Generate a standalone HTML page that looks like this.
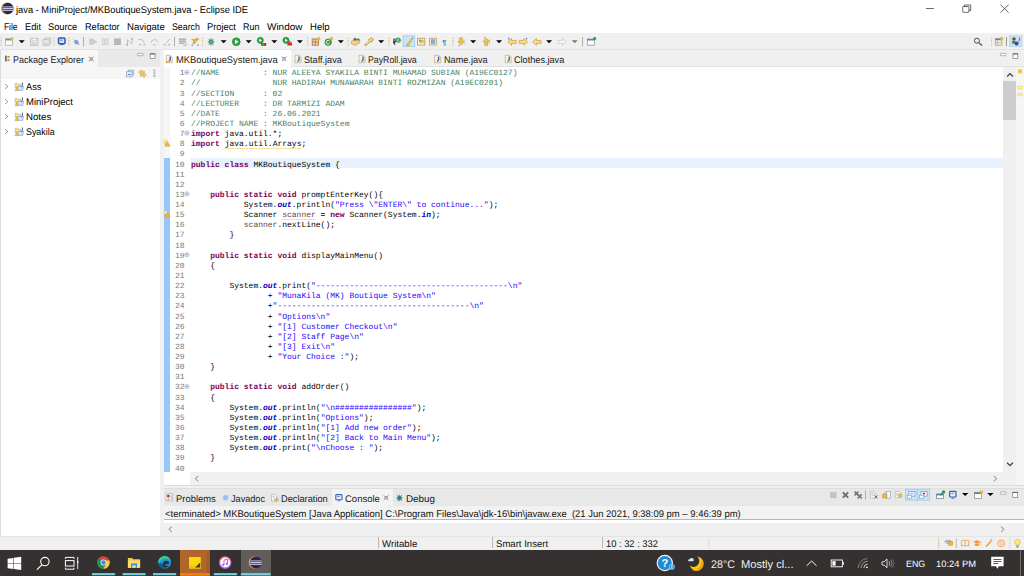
<!DOCTYPE html>
<html><head><meta charset="utf-8"><title>java - MiniProject/MKBoutiqueSystem.java - Eclipse IDE</title>
<style>

*{box-sizing:border-box;margin:0;padding:0}
html,body{width:1024px;height:576px;overflow:hidden;background:#f0f0f0;font-family:"Liberation Sans",sans-serif;color:#000}
.a{position:absolute}
.t{position:absolute;white-space:pre;line-height:1;text-rendering:geometricPrecision}
.ln{position:absolute;left:160px;width:24.6px;text-align:right;font:8px/10.1333px "Liberation Mono",monospace;color:#787878;white-space:pre;text-rendering:geometricPrecision}
.cl{position:absolute;font:8px/10.1333px "Liberation Mono",monospace;color:#000;white-space:pre;text-rendering:geometricPrecision}
.k{color:#7f0055;font-weight:bold}
.c{color:#3f7f5f}
.s{color:#2a00ff}
.f{color:#0000c0;font-weight:bold;font-style:italic}
.v{color:#6a3e3e}
.vw{color:#6a3e3e}
.w{}
.sq{position:absolute;height:1.2px;background:repeating-linear-gradient(90deg,#f3d67e 0 1.2px,#faecc4 1.2px 2.4px)}

</style></head>
<body>
<div class="a" style="left:0px;top:0px;width:1024px;height:33px;background:#fff;"></div>
<div class="t" style="left:16.30px;top:6.00px;font-size:9.80px;transform:scaleX(0.9508);transform-origin:0 0;">java - MiniProject/MKBoutiqueSystem.java - Eclipse IDE</div>
<div class="t" style="left:4.00px;top:23.00px;font-size:9.70px;transform:scaleX(0.8637);transform-origin:0 0;">File</div>
<div class="t" style="left:25.20px;top:23.00px;font-size:9.70px;transform:scaleX(0.9572);transform-origin:0 0;">Edit</div>
<div class="t" style="left:48.30px;top:23.00px;font-size:9.70px;transform:scaleX(0.9533);transform-origin:0 0;">Source</div>
<div class="t" style="left:84.90px;top:23.00px;font-size:9.70px;transform:scaleX(0.9465);transform-origin:0 0;">Refactor</div>
<div class="t" style="left:127.00px;top:23.00px;font-size:9.70px;transform:scaleX(0.9900);transform-origin:0 0;">Navigate</div>
<div class="t" style="left:171.60px;top:23.00px;font-size:9.70px;transform:scaleX(0.9077);transform-origin:0 0;">Search</div>
<div class="t" style="left:207.00px;top:23.00px;font-size:9.70px;transform:scaleX(0.9573);transform-origin:0 0;">Project</div>
<div class="t" style="left:243.30px;top:23.00px;font-size:9.70px;transform:scaleX(0.9272);transform-origin:0 0;">Run</div>
<div class="t" style="left:267.30px;top:23.00px;font-size:9.70px;transform:scaleX(1.0290);transform-origin:0 0;">Window</div>
<div class="t" style="left:310.20px;top:23.00px;font-size:9.70px;transform:scaleX(0.9875);transform-origin:0 0;">Help</div>
<div class="a" style="left:0px;top:33px;width:1024px;height:16.5px;background:#f0f0f0;"></div>
<div class="a" style="left:0px;top:49px;width:1024px;height:1px;background:#e3e3e3;"></div>
<div class="a" style="left:0px;top:50px;width:160.3px;height:485.5px;background:#fff;"></div>
<div class="a" style="left:0px;top:50px;width:160.3px;height:16.6px;background:#e9e9e9;"></div>
<div class="a" style="left:0px;top:50px;width:98px;height:16.6px;background:#f6f6f6;"></div>
<div class="a" style="left:0px;top:66.6px;width:160.3px;height:12px;background:#f6f6f6;"></div>
<div class="a" style="left:0px;top:50px;width:1px;height:485.5px;background:#dcdcdc;"></div>
<div class="t" style="left:13.20px;top:56.00px;font-size:9.70px;transform:scaleX(0.9286);transform-origin:0 0;color:#1a1a1a;">Package Explorer</div>
<div class="t" style="left:25.90px;top:83.00px;font-size:9.70px;transform:scaleX(0.9524);transform-origin:0 0;">Ass</div>
<div class="t" style="left:26.20px;top:98.00px;font-size:9.70px;transform:scaleX(0.9796);transform-origin:0 0;">MiniProject</div>
<div class="t" style="left:26.20px;top:113.00px;font-size:9.70px;transform:scaleX(0.9984);transform-origin:0 0;">Notes</div>
<div class="t" style="left:25.80px;top:128.00px;font-size:9.70px;transform:scaleX(0.9146);transform-origin:0 0;">Syakila</div>
<div class="a" style="left:163.7px;top:49.6px;width:860.3px;height:17px;background:#f0f0f0;"></div>
<div class="a" style="left:163.7px;top:49.6px;width:127.5px;height:17.4px;background:#fff;"></div>
<div class="a" style="left:291.2px;top:66.2px;width:733px;height:0.8px;background:#e0e0e0;"></div>
<div class="a" style="left:163.7px;top:67px;width:839.3px;height:405px;background:#fff;"></div>
<div class="a" style="left:163.7px;top:67px;width:6.3px;height:405px;background:#f6f6f6;"></div>
<div class="a" style="left:163.7px;top:472px;width:26.1px;height:12.8px;background:#fff;"></div>
<div class="a" style="left:163.8px;top:158px;width:6.1px;height:313.5px;background:#97c6f8;"></div>
<div class="a" style="left:191px;top:158.1px;width:812px;height:10.1px;background:#e8f2fe;"></div>
<div class="a" style="left:1003px;top:67px;width:13px;height:405px;background:#f0f0f0;"></div>
<div class="a" style="left:1003px;top:81px;width:13px;height:39px;background:#cdcdcd;"></div>
<div class="a" style="left:1016px;top:67px;width:8px;height:418px;background:#f5f5f5;"></div>
<div class="a" style="left:189.8px;top:472px;width:826px;height:12.8px;background:#f0f0f0;"></div>
<div class="a" style="left:163.7px;top:484.8px;width:860.3px;height:0.8px;background:#dcdcdc;"></div>
<div class="t" style="left:175.80px;top:56.00px;font-size:9.70px;transform:scaleX(0.9633);transform-origin:0 0;color:#1a1a1a;">MKBoutiqueSystem.java</div>
<div class="t" style="left:303.80px;top:56.00px;font-size:9.70px;transform:scaleX(0.9388);transform-origin:0 0;color:#1a1a1a;">Staff.java</div>
<div class="t" style="left:368.20px;top:56.00px;font-size:9.70px;transform:scaleX(0.9051);transform-origin:0 0;color:#1a1a1a;">PayRoll.java</div>
<div class="t" style="left:443.60px;top:56.00px;font-size:9.70px;transform:scaleX(0.9425);transform-origin:0 0;color:#1a1a1a;">Name.java</div>
<div class="t" style="left:513.80px;top:56.00px;font-size:9.70px;transform:scaleX(0.9423);transform-origin:0 0;color:#1a1a1a;">Clothes.java</div>
<div class="ln" style="top:69.30px">1</div>
<div class="cl" style="top:69.30px;left:191.00px"><span class="c">//NAME         : NUR ALEEYA SYAKILA BINTI MUHAMAD SUBIAN (A19EC0127)</span></div>
<div class="ln" style="top:79.43px">2</div>
<div class="cl" style="top:79.43px;left:191.00px"><span class="c">//               NUR HADIRAH MUNAWARAH BINTI ROZMIZAN (A19EC0201)</span></div>
<div class="ln" style="top:89.57px">3</div>
<div class="cl" style="top:89.57px;left:191.00px"><span class="c">//SECTION      : 02</span></div>
<div class="ln" style="top:99.70px">4</div>
<div class="cl" style="top:99.70px;left:191.00px"><span class="c">//LECTURER     : DR TARMIZI ADAM</span></div>
<div class="ln" style="top:109.83px">5</div>
<div class="cl" style="top:109.83px;left:191.00px"><span class="c">//DATE         : 26.06.2021</span></div>
<div class="ln" style="top:119.97px">6</div>
<div class="cl" style="top:119.97px;left:191.00px"><span class="c">//PROJECT NAME : MKBoutiqueSystem</span></div>
<div class="ln" style="top:130.10px">7</div>
<div class="cl" style="top:130.10px;left:191.00px"><span class="k">import</span> java.util.*;</div>
<div class="ln" style="top:140.23px">8</div>
<div class="sq" style="top:147.73px;left:224.60px;width:76.80px"></div>
<div class="cl" style="top:140.23px;left:191.00px"><span class="k">import</span> <span class="w">java.util.Arrays</span>;</div>
<div class="ln" style="top:150.37px">9</div>
<div class="ln" style="top:160.50px">10</div>
<div class="cl" style="top:160.50px;left:191.00px"><span class="k">public class</span> MKBoutiqueSystem {</div>
<div class="ln" style="top:170.63px">11</div>
<div class="ln" style="top:180.77px">12</div>
<div class="ln" style="top:190.90px">13</div>
<div class="cl" style="top:190.90px;left:210.20px"><span class="k">public static void</span> promptEnterKey(){</div>
<div class="ln" style="top:201.03px">14</div>
<div class="cl" style="top:201.03px;left:243.80px">System.<span class="f">out</span>.println(<span class="s">"Press \"ENTER\" to continue..."</span>);</div>
<div class="ln" style="top:211.17px">15</div>
<div class="sq" style="top:218.67px;left:282.20px;width:33.60px"></div>
<div class="cl" style="top:211.17px;left:243.80px">Scanner <span class="vw">scanner</span> = <span class="k">new</span> Scanner(System.<span class="f">in</span>);</div>
<div class="ln" style="top:221.30px">16</div>
<div class="cl" style="top:221.30px;left:243.80px"><span class="v">scanner</span>.nextLine();</div>
<div class="ln" style="top:231.43px">17</div>
<div class="cl" style="top:231.43px;left:229.40px">}</div>
<div class="ln" style="top:241.57px">18</div>
<div class="ln" style="top:251.70px">19</div>
<div class="cl" style="top:251.70px;left:210.20px"><span class="k">public static void</span> displayMainMenu()</div>
<div class="ln" style="top:261.83px">20</div>
<div class="cl" style="top:261.83px;left:210.20px">{</div>
<div class="ln" style="top:271.97px">21</div>
<div class="ln" style="top:282.10px">22</div>
<div class="cl" style="top:282.10px;left:229.40px">System.<span class="f">out</span>.print(<span class="s">"----------------------------------------\n"</span></div>
<div class="ln" style="top:292.23px">23</div>
<div class="cl" style="top:292.23px;left:267.80px">+ <span class="s">"MunaKila (MK) Boutique System\n"</span></div>
<div class="ln" style="top:302.37px">24</div>
<div class="cl" style="top:302.37px;left:267.80px">+<span class="s">"----------------------------------------\n"</span></div>
<div class="ln" style="top:312.50px">25</div>
<div class="cl" style="top:312.50px;left:267.80px">+ <span class="s">"Options\n"</span></div>
<div class="ln" style="top:322.63px">26</div>
<div class="cl" style="top:322.63px;left:267.80px">+ <span class="s">"[1] Customer Checkout\n"</span></div>
<div class="ln" style="top:332.77px">27</div>
<div class="cl" style="top:332.77px;left:267.80px">+ <span class="s">"[2] Staff Page\n"</span></div>
<div class="ln" style="top:342.90px">28</div>
<div class="cl" style="top:342.90px;left:267.80px">+ <span class="s">"[3] Exit\n"</span></div>
<div class="ln" style="top:353.03px">29</div>
<div class="cl" style="top:353.03px;left:267.80px">+ <span class="s">"Your Choice :"</span>);</div>
<div class="ln" style="top:363.17px">30</div>
<div class="cl" style="top:363.17px;left:210.20px">}</div>
<div class="ln" style="top:373.30px">31</div>
<div class="ln" style="top:383.43px">32</div>
<div class="cl" style="top:383.43px;left:210.20px"><span class="k">public static void</span> addOrder()</div>
<div class="ln" style="top:393.57px">33</div>
<div class="cl" style="top:393.57px;left:210.20px">{</div>
<div class="ln" style="top:403.70px">34</div>
<div class="cl" style="top:403.70px;left:229.40px">System.<span class="f">out</span>.println(<span class="s">"\n################"</span>);</div>
<div class="ln" style="top:413.83px">35</div>
<div class="cl" style="top:413.83px;left:229.40px">System.<span class="f">out</span>.println(<span class="s">"Options"</span>);</div>
<div class="ln" style="top:423.97px">36</div>
<div class="cl" style="top:423.97px;left:229.40px">System.<span class="f">out</span>.println(<span class="s">"[1] Add new order"</span>);</div>
<div class="ln" style="top:434.10px">37</div>
<div class="cl" style="top:434.10px;left:229.40px">System.<span class="f">out</span>.println(<span class="s">"[2] Back to Main Menu"</span>);</div>
<div class="ln" style="top:444.23px">38</div>
<div class="cl" style="top:444.23px;left:229.40px">System.<span class="f">out</span>.print(<span class="s">"\nChoose : "</span>);</div>
<div class="ln" style="top:454.37px">39</div>
<div class="cl" style="top:454.37px;left:210.20px">}</div>
<div class="ln" style="top:464.50px;height:7.6px;overflow:hidden">40</div>
<div class="a" style="left:163.7px;top:488.2px;width:860.3px;height:17.6px;background:#e8e8e8;"></div>
<div class="a" style="left:163.7px;top:488.2px;width:860.3px;height:0.8px;background:#dedede;"></div>
<div class="a" style="left:332px;top:488.8px;width:61.1px;height:17px;background:#f3f3f3;"></div>
<div class="a" style="left:163.7px;top:505.6px;width:860.3px;height:13.4px;background:#f2f2f2;"></div>
<div class="a" style="left:163.7px;top:519px;width:860.3px;height:0.9px;background:#b6b6b6;"></div>
<div class="a" style="left:163.7px;top:519.9px;width:860.3px;height:2.7px;background:#fff;"></div>
<div class="a" style="left:163.7px;top:522.6px;width:860.3px;height:13.4px;background:#f0f0f0;"></div>
<div class="a" style="left:0px;top:536px;width:1024px;height:0.7px;background:#e4e4e4;"></div>
<div class="t" style="left:176.20px;top:495.00px;font-size:9.70px;transform:scaleX(0.9714);transform-origin:0 0;color:#1a1a1a;">Problems</div>
<div class="t" style="left:231.40px;top:495.00px;font-size:9.70px;transform:scaleX(0.9411);transform-origin:0 0;color:#1a1a1a;">Javadoc</div>
<div class="t" style="left:281.40px;top:495.00px;font-size:9.70px;transform:scaleX(0.9538);transform-origin:0 0;color:#1a1a1a;">Declaration</div>
<div class="t" style="left:344.50px;top:495.00px;font-size:9.70px;transform:scaleX(0.9806);transform-origin:0 0;color:#1a1a1a;">Console</div>
<div class="t" style="left:405.60px;top:495.00px;font-size:9.70px;transform:scaleX(1.0180);transform-origin:0 0;color:#1a1a1a;">Debug</div>
<div class="t" style="left:164.80px;top:510.00px;font-size:9.70px;transform:scaleX(0.9764);transform-origin:0 0;color:#111;">&lt;terminated&gt; MKBoutiqueSystem [Java Application] C:\Program Files\Java\jdk-16\bin\javaw.exe  (21 Jun 2021, 9:38:09 pm – 9:46:39 pm)</div>
<div class="t" style="left:382.30px;top:540.00px;font-size:9.70px;transform:scaleX(0.9972);transform-origin:0 0;color:#111;">Writable</div>
<div class="t" style="left:496.00px;top:540.00px;font-size:9.70px;transform:scaleX(0.9882);transform-origin:0 0;color:#111;">Smart Insert</div>
<div class="t" style="left:605.60px;top:540.00px;font-size:9.70px;transform:scaleX(0.9642);transform-origin:0 0;color:#111;">10 : 32 : 332</div>
<div class="a" style="left:378.2px;top:537px;width:0.7px;height:11px;background:#b8b8b8;"></div>
<div class="a" style="left:492.2px;top:537px;width:0.7px;height:11px;background:#b8b8b8;"></div>
<div class="a" style="left:601.6px;top:537px;width:0.7px;height:11px;background:#b8b8b8;"></div>
<div class="a" style="left:0px;top:550.4px;width:1024px;height:25.6px;background:#343130;"></div>
<div class="a" style="left:180px;top:550.4px;width:30px;height:25.6px;background:#b0652b;"></div>
<div class="a" style="left:241.2px;top:550.4px;width:29.4px;height:25.6px;background:#605d5a;"></div>
<div class="t" style="left:711.40px;top:560.00px;font-size:11.20px;transform:scaleX(0.9550);transform-origin:0 0;color:#f2f2f2;">28°C</div>
<div class="t" style="left:741.40px;top:560.00px;font-size:11.20px;transform:scaleX(0.9944);transform-origin:0 0;color:#f2f2f2;">Mostly cl...</div>
<div class="t" style="left:905.70px;top:560.00px;font-size:9.20px;transform:scaleX(0.9681);transform-origin:0 0;color:#fff;">ENG</div>
<div class="t" style="left:935.60px;top:560.00px;font-size:9.20px;transform:scaleX(1.0208);transform-origin:0 0;color:#fff;">10:24 PM</div>
<svg class="a" style="left:0;top:0" width="1024" height="576" viewBox="0 0 1024 576">
<circle cx="6.90" cy="8.50" r="5.90" fill="#f29b30"/>
<circle cx="7.90" cy="8.50" r="5.70" fill="#2c2255"/>
<rect x="2.50" y="6.35" width="10.90" height="1.10" fill="#b9b5d0"/>
<rect x="2.50" y="8.15" width="10.90" height="1.10" fill="#e6e4f0"/>
<rect x="2.50" y="9.95" width="10.90" height="1.10" fill="#b9b5d0"/>
<path d="M925.9 8.5 h8.0" fill="none" stroke="#2a2a2a" stroke-width="0.7"/>
<rect x="962.70" y="6.50" width="6.20" height="5.80" fill="none" stroke="#2a2a2a" stroke-width="0.7" rx="0.6"/>
<path d="M964.4 6.5 v-1.5 h6.3 v5.6 h-1.8" fill="none" stroke="#2a2a2a" stroke-width="0.7"/>
<path d="M1000.4 4.7 l8.2 8.0 M1008.6 4.7 l-8.2 8.0" fill="none" stroke="#2a2a2a" stroke-width="0.7"/>
<rect x="0.70" y="37.60" width="1.1" height="1.1" fill="#d0b985"/>
<rect x="0.70" y="39.90" width="1.1" height="1.1" fill="#d0b985"/>
<rect x="0.70" y="42.20" width="1.1" height="1.1" fill="#d0b985"/>
<rect x="0.70" y="44.50" width="1.1" height="1.1" fill="#d0b985"/>
<rect x="5.40" y="38.80" width="7.00" height="6.40" fill="#fffdf2" stroke="#a09a80" stroke-width="0.6"/>
<rect x="5.40" y="38.80" width="7.00" height="1.60" fill="#5f8fd0"/>
<circle cx="11.90" cy="38.70" r="1.40" fill="#f4cc48" stroke="#c79a1c" stroke-width="0.4"/>
<path d="M18.75 40.25 h6.00 l-3.00 3.00 z" fill="#000"/>
<rect x="30.40" y="38.20" width="7.60" height="7.20" fill="#e6e6e6" stroke="#bdbdbd" stroke-width="0.8"/>
<rect x="32.20" y="38.20" width="4.00" height="2.60" fill="#f6f6f6" stroke="#c6c6c6" stroke-width="0.5"/>
<rect x="32.00" y="42.40" width="4.40" height="3.00" fill="#d4d4d4"/>
<rect x="44.60" y="38.00" width="6.20" height="5.80" fill="#e2e2e2" stroke="#c0c0c0" stroke-width="0.8"/>
<rect x="42.90" y="39.70" width="6.20" height="5.80" fill="#e8e8e8" stroke="#bdbdbd" stroke-width="0.8"/>
<rect x="44.30" y="43.00" width="3.40" height="2.50" fill="#d2d2d2"/>
<rect x="53.40" y="37.60" width="1.1" height="1.1" fill="#d0b985"/>
<rect x="53.40" y="39.90" width="1.1" height="1.1" fill="#d0b985"/>
<rect x="53.40" y="42.20" width="1.1" height="1.1" fill="#d0b985"/>
<rect x="53.40" y="44.50" width="1.1" height="1.1" fill="#d0b985"/>
<rect x="58.50" y="37.90" width="6.50" height="5.80" fill="#d4e2f6" stroke="#2c5ab0" stroke-width="1.5" rx="0.9"/>
<rect x="60.10" y="39.70" width="2.40" height="0.90" fill="#4a70b8"/>
<rect x="60.20" y="44.20" width="3.20" height="0.90" fill="#2c5ab0"/>
<rect x="68.40" y="37.60" width="1.1" height="1.1" fill="#d0b985"/>
<rect x="68.40" y="39.90" width="1.1" height="1.1" fill="#d0b985"/>
<rect x="68.40" y="42.20" width="1.1" height="1.1" fill="#d0b985"/>
<rect x="68.40" y="44.50" width="1.1" height="1.1" fill="#d0b985"/>
<circle cx="76.40" cy="42.20" r="1.70" fill="#9fc0e6" stroke="#4a78b4" stroke-width="0.6"/>
<path d="M74.0 39.6 l5.2 5.2" fill="none" stroke="#4a70a8" stroke-width="0.8"/>
<rect x="83.15" y="37.00" width="0.9" height="9.30" fill="#a8a8a8"/>
<rect x="89.20" y="38.80" width="1.50" height="6.00" fill="#c4c4c4"/>
<path d="M91.6 38.8 l5.2 3 l-5.2 3z" fill="#d2d2d2" stroke="#b4b4b4" stroke-width="0.6"/>
<rect x="102.20" y="38.80" width="2.40" height="6.00" fill="#e4e4e4" stroke="#c4c4c4" stroke-width="0.6"/>
<rect x="105.80" y="38.80" width="2.40" height="6.00" fill="#e4e4e4" stroke="#c4c4c4" stroke-width="0.6"/>
<rect x="114.60" y="38.90" width="5.80" height="5.80" fill="#b9b9b9" stroke="#a8a8a8" stroke-width="0.6"/>
<path d="M127.4 44.4 v-4.6 l4.6 4.4 v-4.6" fill="none" stroke="#bcbcbc" stroke-width="0.9"/>
<circle cx="132.20" cy="39.00" r="1.00" fill="#adadad"/>
<circle cx="127.20" cy="44.80" r="1.00" fill="#adadad"/>
<path d="M138.6 39.6 h3.4 l2.4 3.6" fill="none" stroke="#bdbdbd" stroke-width="1"/>
<rect x="139.00" y="44.20" width="2.20" height="1.10" fill="#b4b4b4"/>
<rect x="143.40" y="44.20" width="2.00" height="1.10" fill="#b4b4b4"/>
<path d="M151.3 43 q0.2 -3.6 3.3 -3.4 q2.8 0 3 2.6" fill="none" stroke="#c2c2c2" stroke-width="1"/>
<rect x="153.20" y="44.20" width="2.40" height="1.10" fill="#bcbcbc"/>
<path d="M169.8 39.2 l-3.6 4" fill="none" stroke="#bdbdbd" stroke-width="1"/>
<rect x="163.40" y="44.20" width="2.40" height="1.10" fill="#b4b4b4"/>
<rect x="167.80" y="44.20" width="2.20" height="1.10" fill="#b4b4b4"/>
<rect x="174.05" y="37.00" width="0.9" height="9.30" fill="#a8a8a8"/>
<rect x="179.00" y="38.70" width="7.00" height="0.75" fill="#6e6e6e"/>
<rect x="179.00" y="40.70" width="7.00" height="0.75" fill="#6e6e6e"/>
<rect x="179.00" y="42.70" width="4.80" height="0.75" fill="#6e6e6e"/>
<circle cx="185.00" cy="44.30" r="1.40" fill="none" stroke="#9a9a9a" stroke-width="0.6"/>
<path d="M191.6 39.5 h3 l2.6 -1.4 l1.6 1 l-3 2.6 l-1.4 2.2 l-1.6 -0.6 l1 -2.4z" fill="#d9a928" stroke="#b98a18" stroke-width="0.4"/>
<path d="M193.0 42.6 l4.6 -3.6" fill="none" stroke="#e8c250" stroke-width="0.8"/>
<rect x="191.60" y="44.60" width="1.40" height="1.00" fill="#3c6ab0"/>
<rect x="197.20" y="44.60" width="1.40" height="1.00" fill="#3c6ab0"/>
<rect x="202.10" y="37.60" width="1.1" height="1.1" fill="#d0b985"/>
<rect x="202.10" y="39.90" width="1.1" height="1.1" fill="#d0b985"/>
<rect x="202.10" y="42.20" width="1.1" height="1.1" fill="#d0b985"/>
<rect x="202.10" y="44.50" width="1.1" height="1.1" fill="#d0b985"/>
<path d="M207.8 41.9 h6.8 M208.5 38.9 l5.2 6.0 M213.7 38.9 l-5.2 6.0 M211.1 38.0 v7.8" fill="none" stroke="#2f8577" stroke-width="0.7"/>
<circle cx="211.10" cy="41.90" r="2.10" fill="#54b09c" stroke="#1f6f66" stroke-width="0.6"/>
<path d="M220.60 40.25 h6.00 l-3.00 3.00 z" fill="#000"/>
<circle cx="236.25" cy="41.75" r="3.90" fill="#35a243" stroke="#1f7a2c" stroke-width="0.6"/>
<path d="M235.0 39.6 l3.5 2.15 l-3.5 2.15z" fill="#fff"/>
<path d="M245.70 40.25 h6.00 l-3.00 3.00 z" fill="#000"/>
<circle cx="260.30" cy="40.30" r="3.10" fill="#35a243" stroke="#1f7a2c" stroke-width="0.5"/>
<path d="M259.4 38.7 l2.6 1.6 l-2.6 1.6z" fill="#fff"/>
<rect x="261.20" y="43.30" width="2.40" height="2.30" fill="#2fa33c"/>
<rect x="263.60" y="43.30" width="2.40" height="2.30" fill="#d42020"/>
<rect x="261.20" y="43.30" width="4.80" height="2.30" fill="none" stroke="#333" stroke-width="0.4"/>
<path d="M271.30 40.25 h6.00 l-3.00 3.00 z" fill="#000"/>
<circle cx="286.00" cy="40.30" r="3.10" fill="#35a243" stroke="#1f7a2c" stroke-width="0.5"/>
<path d="M285.1 38.7 l2.6 1.6 l-2.6 1.6z" fill="#fff"/>
<rect x="287.40" y="42.60" width="4.60" height="2.80" fill="#d8262c" rx="0.5"/>
<rect x="288.80" y="41.70" width="1.80" height="1.00" fill="none" stroke="#d8262c" stroke-width="0.5"/>
<path d="M296.90 40.25 h6.00 l-3.00 3.00 z" fill="#000"/>
<rect x="307.10" y="37.60" width="1.1" height="1.1" fill="#d0b985"/>
<rect x="307.10" y="39.90" width="1.1" height="1.1" fill="#d0b985"/>
<rect x="307.10" y="42.20" width="1.1" height="1.1" fill="#d0b985"/>
<rect x="307.10" y="44.50" width="1.1" height="1.1" fill="#d0b985"/>
<rect x="312.20" y="39.00" width="6.20" height="6.20" fill="#e9d2b0" stroke="#a8703a" stroke-width="0.8"/>
<path d="M312.2 42.1 h6.2 M315.3 39 v6.2" fill="none" stroke="#a8703a" stroke-width="0.7"/>
<circle cx="318.60" cy="38.70" r="1.50" fill="#f2c12e" stroke="#c79a1c" stroke-width="0.4"/>
<circle cx="328.20" cy="42.20" r="3.30" fill="#3aa04a" stroke="#1f7a2c" stroke-width="0.6"/>
<path d="M329.6 41.0 a1.9 1.9 0 1 0 0 2.4" fill="none" stroke="#fff" stroke-width="0.9"/>
<circle cx="331.30" cy="38.70" r="1.40" fill="#f2c12e" stroke="#c79a1c" stroke-width="0.4"/>
<path d="M337.80 40.25 h6.00 l-3.00 3.00 z" fill="#000"/>
<rect x="347.70" y="37.60" width="1.1" height="1.1" fill="#d0b985"/>
<rect x="347.70" y="39.90" width="1.1" height="1.1" fill="#d0b985"/>
<rect x="347.70" y="42.20" width="1.1" height="1.1" fill="#d0b985"/>
<rect x="347.70" y="44.50" width="1.1" height="1.1" fill="#d0b985"/>
<path d="M351.6 41.0 l3.0 -1.8 l5.2 0.6 l-0.4 3.4 l-4.4 2.2 l-3.6 -1.6z" fill="#ecd28c" stroke="#b8923e" stroke-width="0.6"/>
<circle cx="355.00" cy="39.20" r="1.50" fill="#7a52a8"/>
<rect x="356.60" y="38.60" width="3.00" height="2.00" fill="#2f9e48" rx="0.9"/>
<path d="M364.4 44.9 l1.4 1.0 l3.4 -3.2 l3.4 -1.4 l0.6 -2.4 l-2.0 -1.2 l-2.2 1.4 l-1.0 2.6z" fill="#e8c66a" stroke="#9a7a34" stroke-width="0.5"/>
<path d="M366.4 43.6 l3.6 -3.6" fill="none" stroke="#fff3c4" stroke-width="0.8"/>
<circle cx="371.00" cy="39.60" r="0.80" fill="#f5e6a0"/>
<path d="M378.20 40.25 h6.00 l-3.00 3.00 z" fill="#000"/>
<rect x="388.40" y="37.60" width="1.1" height="1.1" fill="#d0b985"/>
<rect x="388.40" y="39.90" width="1.1" height="1.1" fill="#d0b985"/>
<rect x="388.40" y="42.20" width="1.1" height="1.1" fill="#d0b985"/>
<rect x="388.40" y="44.50" width="1.1" height="1.1" fill="#d0b985"/>
<path d="M393.0 39.0 h3.6 v3.0 h-1.4 v3.4 l-2.2 -2.6z" fill="#3a3a3a"/>
<rect x="393.00" y="38.60" width="3.40" height="2.60" fill="#7c72b0"/>
<circle cx="398.20" cy="40.20" r="2.40" fill="#3fa655" stroke="#1f7a2c" stroke-width="0.4"/>
<path d="M399.2 39.4 a1.2 1.2 0 1 0 0 1.6" fill="none" stroke="#fff" stroke-width="0.6"/>
<rect x="403.00" y="35.90" width="11.70" height="10.80" fill="#cce4f7" stroke="#90c8f6" stroke-width="0.7"/>
<path d="M406.2 45.2 l5.2 -6.6 l1.4 -0.4 l-0.2 1.6 l-3.8 5.2z" fill="#e8c64a" stroke="#b89a30" stroke-width="0.4"/>
<path d="M405.6 45.5 h4.2" fill="none" stroke="#e0b820" stroke-width="1.2"/>
<path d="M411.6 38.4 l1.4 -0.8" fill="none" stroke="#777" stroke-width="0.8"/>
<rect x="417.60" y="38.20" width="7.20" height="6.90" fill="#f4ecd6" stroke="#b49a62" stroke-width="0.8"/>
<path d="M420.2 39.8 l3.4 0 l0 3.6 l-1.6 -1.0 l-1.8 1.4z" fill="#e6b82e"/>
<rect x="419.00" y="39.60" width="1.60" height="2.00" fill="#6f8fc4"/>
<rect x="429.40" y="38.20" width="7.20" height="6.90" fill="#f2ecd8" stroke="#b8a46e" stroke-width="0.8"/>
<rect x="431.20" y="39.80" width="3.60" height="3.80" fill="#8fb0e4" stroke="#5c84c8" stroke-width="0.5"/>
<text x="442.3" y="44.7" font-family="Liberation Sans, sans-serif" font-size="7.2" font-weight="bold" fill="#4a7fd0">¶</text>
<rect x="452.40" y="37.60" width="1.1" height="1.1" fill="#d0b985"/>
<rect x="452.40" y="39.90" width="1.1" height="1.1" fill="#d0b985"/>
<rect x="452.40" y="42.20" width="1.1" height="1.1" fill="#d0b985"/>
<rect x="452.40" y="44.50" width="1.1" height="1.1" fill="#d0b985"/>
<path d="M459.6 37.8 h2.8 v3.6 h1.8 l-3.2 3.6 l-3.2 -3.6 h1.8z" fill="#f0c846" stroke="#b88a1a" stroke-width="0.5"/>
<rect x="463.60" y="39.20" width="1.00" height="5.60" fill="#b8c4dc"/>
<rect x="458.60" y="45.20" width="1.20" height="0.90" fill="#3c6ab0"/>
<path d="M470.10 40.25 h6.00 l-3.00 3.00 z" fill="#000"/>
<path d="M484.8 45.4 h2.8 v-3.6 h1.8 l-3.2 -3.6 l-3.2 3.6 h1.8z" fill="#f0c846" stroke="#b88a1a" stroke-width="0.5"/>
<rect x="489.00" y="38.60" width="1.00" height="5.60" fill="#b8c4dc"/>
<rect x="484.20" y="37.30" width="1.20" height="0.90" fill="#3c6ab0"/>
<path d="M496.10 40.25 h6.00 l-3.00 3.00 z" fill="#000"/>
<path d="M507.80 41.90 l3.8 -3.4 v1.9 h4.6 v3.0 h-4.6 v1.9z" fill="#f9dc7c" stroke="#c2901c" stroke-width="0.6"/>
<path d="M508.2 38.0 l1.2 1.2 M509.4 38.0 l-1.2 1.2 M508.8 37.7 v1.8" fill="none" stroke="#2f5fa8" stroke-width="0.5"/>
<path d="M527.60 41.90 l-3.8 -3.4 v1.9 h-4.6 v3.0 h4.6 v1.9z" fill="#f9dc7c" stroke="#c2901c" stroke-width="0.6"/>
<path d="M526.0 38.0 l1.2 1.2 M527.2 38.0 l-1.2 1.2 M526.6 37.7 v1.8" fill="none" stroke="#2f5fa8" stroke-width="0.5"/>
<path d="M532.60 41.90 l3.8 -3.4 v1.9 h4.6 v3.0 h-4.6 v1.9z" fill="#f9dc7c" stroke="#c2901c" stroke-width="0.6"/>
<path d="M546.10 40.25 h6.00 l-3.00 3.00 z" fill="#000"/>
<path d="M566.40 41.90 l-3.8 -3.4 v1.9 h-4.6 v3.0 h4.6 v1.9z" fill="#f4f4f4" stroke="#c2c2c2" stroke-width="0.6"/>
<path d="M571.70 40.25 h6.00 l-3.00 3.00 z" fill="#7a7a7a"/>
<rect x="582.15" y="37.00" width="0.9" height="9.30" fill="#a8a8a8"/>
<rect x="587.30" y="39.00" width="7.00" height="6.20" fill="#fdfdfd" stroke="#7f8c9c" stroke-width="0.7"/>
<rect x="587.30" y="39.00" width="7.00" height="1.50" fill="#5a86c0"/>
<circle cx="594.60" cy="38.60" r="1.60" fill="#2f9e48"/>
<circle cx="976.90" cy="40.70" r="2.50" fill="none" stroke="#4a4a4a" stroke-width="1"/>
<path d="M978.8 42.6 l3.2 2.9" fill="none" stroke="#4a4a4a" stroke-width="1.2"/>
<rect x="991.00" y="37.60" width="1.1" height="1.1" fill="#d0b985"/>
<rect x="991.00" y="39.90" width="1.1" height="1.1" fill="#d0b985"/>
<rect x="991.00" y="42.20" width="1.1" height="1.1" fill="#d0b985"/>
<rect x="991.00" y="44.50" width="1.1" height="1.1" fill="#d0b985"/>
<rect x="995.30" y="38.60" width="6.60" height="6.60" fill="#f6f2e2" stroke="#a89a6a" stroke-width="0.7"/>
<rect x="995.30" y="38.60" width="6.60" height="1.60" fill="#5a86c0"/>
<path d="M997.6 40.2 v5 M995.3 42.8 h6.6" fill="none" stroke="#a89a6a" stroke-width="0.6"/>
<circle cx="1001.60" cy="38.60" r="1.50" fill="#f2c12e" stroke="#c79a1c" stroke-width="0.4"/>
<rect x="1005.95" y="36.90" width="0.9" height="9.30" fill="#8c8c8c"/>
<rect x="1009.30" y="35.90" width="12.60" height="10.80" fill="#c6e0f6" stroke="#a6d0f4" stroke-width="0.6"/>
<circle cx="1014.00" cy="39.00" r="1.80" fill="#8a4a2a"/>
<rect x="1012.00" y="40.80" width="3.60" height="3.00" fill="#2f9e48" rx="0.8"/>
<circle cx="1016.60" cy="43.60" r="2.00" fill="#5a3a9a"/>
<path d="M1019.6 37.6 q0.6 2.6 -1.2 4.0" fill="none" stroke="#3f74c4" stroke-width="1"/>
<rect x="5.20" y="55.60" width="1.40" height="5.80" fill="#4a4a4a"/>
<rect x="7.40" y="56.00" width="2.20" height="1.80" fill="#d98a2a"/>
<rect x="7.40" y="59.20" width="2.20" height="1.80" fill="#d98a2a"/>
<path d="M88.80 56.50 l5 5 M93.80 56.50 l-5 5" fill="none" stroke="#8a8a8a" stroke-width="0.8"/>
<rect x="90.10" y="57.80" width="2.40" height="2.40" fill="none" stroke="#8a8a8a" stroke-width="0.6"/>
<rect x="137.60" y="53.40" width="5.60" height="2.30" fill="#fff" stroke="#8a8a8a" stroke-width="0.6" rx="0.4"/>
<rect x="150.20" y="53.80" width="4.80" height="4.80" fill="#fff" stroke="#7a7a7a" stroke-width="0.7"/>
<rect x="149.90" y="53.30" width="5.40" height="1.10" fill="#6a6a6a"/>
<rect x="128.20" y="70.20" width="5.40" height="5.00" fill="#dbe8f8" stroke="#7f9cc4" stroke-width="0.7"/>
<rect x="126.60" y="71.80" width="5.40" height="5.00" fill="#eef4fc" stroke="#7f9cc4" stroke-width="0.7"/>
<rect x="127.80" y="74.00" width="3.00" height="0.80" fill="#3c5f96"/>
<path d="M138.6 72.0 l2.5 -2.1 v1.2 h3.2 v1.8 h-3.2 v1.2z" fill="#f8dc80" stroke="#c8961e" stroke-width="0.6"/>
<path d="M146.3 75.2 l-2.5 -2.1 v1.2 h-3.2 v1.8 h3.2 v1.2z" fill="#f8dc80" stroke="#c8961e" stroke-width="0.6"/>
<circle cx="154.40" cy="70.40" r="0.90" fill="#fff" stroke="#777" stroke-width="0.5"/>
<circle cx="154.40" cy="73.20" r="0.90" fill="#fff" stroke="#777" stroke-width="0.5"/>
<circle cx="154.40" cy="76.00" r="0.90" fill="#fff" stroke="#777" stroke-width="0.5"/>
<path d="M5.10 84.10 l2.7 2.4 l-2.7 2.4" fill="none" stroke="#8c8c8c" stroke-width="0.9"/>
<path d="M15.10 83.30 h2.4 l0.8 0.9 h2.6 v3.6 h-5.8z" fill="#f4dc98" stroke="#cda84a" stroke-width="0.5"/>
<path d="M17.70 86.40 h6.0 l-1.1 4.0 h-4.9z" fill="#cfe5fa" stroke="#6c9cd8" stroke-width="0.6"/>
<path d="M22.40 82.50 v2.9 q0 1.2 -1.4 1.2" fill="none" stroke="#3a66b8" stroke-width="1"/>
<path d="M14.80 90.80 l1.9 -3.7 l1.9 3.7z" fill="#f1b93c" stroke="#c8902a" stroke-width="0.3"/>
<path d="M5.10 99.10 l2.7 2.4 l-2.7 2.4" fill="none" stroke="#8c8c8c" stroke-width="0.9"/>
<path d="M15.10 98.30 h2.4 l0.8 0.9 h2.6 v3.6 h-5.8z" fill="#f4dc98" stroke="#cda84a" stroke-width="0.5"/>
<path d="M17.70 101.40 h6.0 l-1.1 4.0 h-4.9z" fill="#cfe5fa" stroke="#6c9cd8" stroke-width="0.6"/>
<path d="M22.40 97.50 v2.9 q0 1.2 -1.4 1.2" fill="none" stroke="#3a66b8" stroke-width="1"/>
<path d="M14.80 105.80 l1.9 -3.7 l1.9 3.7z" fill="#f1b93c" stroke="#c8902a" stroke-width="0.3"/>
<path d="M5.10 114.10 l2.7 2.4 l-2.7 2.4" fill="none" stroke="#8c8c8c" stroke-width="0.9"/>
<path d="M15.10 113.30 h2.4 l0.8 0.9 h2.6 v3.6 h-5.8z" fill="#f4dc98" stroke="#cda84a" stroke-width="0.5"/>
<path d="M17.70 116.40 h6.0 l-1.1 4.0 h-4.9z" fill="#cfe5fa" stroke="#6c9cd8" stroke-width="0.6"/>
<path d="M22.40 112.50 v2.9 q0 1.2 -1.4 1.2" fill="none" stroke="#3a66b8" stroke-width="1"/>
<path d="M14.80 120.80 l1.9 -3.7 l1.9 3.7z" fill="#f1b93c" stroke="#c8902a" stroke-width="0.3"/>
<path d="M5.10 129.10 l2.7 2.4 l-2.7 2.4" fill="none" stroke="#8c8c8c" stroke-width="0.9"/>
<path d="M15.10 128.30 h2.4 l0.8 0.9 h2.6 v3.6 h-5.8z" fill="#f4dc98" stroke="#cda84a" stroke-width="0.5"/>
<path d="M17.70 131.40 h6.0 l-1.1 4.0 h-4.9z" fill="#cfe5fa" stroke="#6c9cd8" stroke-width="0.6"/>
<path d="M22.40 127.50 v2.9 q0 1.2 -1.4 1.2" fill="none" stroke="#3a66b8" stroke-width="1"/>
<path d="M14.80 135.80 l1.9 -3.7 l1.9 3.7z" fill="#f1b93c" stroke="#c8902a" stroke-width="0.3"/>
<path d="M166.20 55.30 h4.2 l1.8 1.8 v5.6 h-6z" fill="#f6f3ea" stroke="#c4aa6a" stroke-width="0.7"/>
<path d="M170.20 56.60 v3.0 q0 1.5 -1.6 1.4" fill="none" stroke="#3468c0" stroke-width="1.4"/>
<path d="M165.6 63.1 l1.6 -2.6 l1.6 2.6z" fill="#e8a020"/>
<path d="M295.00 55.30 h4.2 l1.8 1.8 v5.6 h-6z" fill="#f6f3ea" stroke="#c4aa6a" stroke-width="0.7"/>
<path d="M299.00 56.60 v3.0 q0 1.5 -1.6 1.4" fill="none" stroke="#3468c0" stroke-width="1.4"/>
<path d="M359.00 55.30 h4.2 l1.8 1.8 v5.6 h-6z" fill="#f6f3ea" stroke="#c4aa6a" stroke-width="0.7"/>
<path d="M363.00 56.60 v3.0 q0 1.5 -1.6 1.4" fill="none" stroke="#3468c0" stroke-width="1.4"/>
<path d="M434.60 55.30 h4.2 l1.8 1.8 v5.6 h-6z" fill="#f6f3ea" stroke="#c4aa6a" stroke-width="0.7"/>
<path d="M438.60 56.60 v3.0 q0 1.5 -1.6 1.4" fill="none" stroke="#3468c0" stroke-width="1.4"/>
<path d="M505.20 55.30 h4.2 l1.8 1.8 v5.6 h-6z" fill="#f6f3ea" stroke="#c4aa6a" stroke-width="0.7"/>
<path d="M509.20 56.60 v3.0 q0 1.5 -1.6 1.4" fill="none" stroke="#3468c0" stroke-width="1.4"/>
<path d="M281.60 56.30 l5 5 M286.60 56.30 l-5 5" fill="none" stroke="#8f8f8f" stroke-width="0.8"/>
<rect x="282.90" y="57.60" width="2.40" height="2.40" fill="none" stroke="#8f8f8f" stroke-width="0.6"/>
<rect x="1000.40" y="53.40" width="5.60" height="2.30" fill="#fff" stroke="#8a8a8a" stroke-width="0.6" rx="0.4"/>
<rect x="1013.00" y="53.80" width="4.80" height="4.80" fill="#fff" stroke="#7a7a7a" stroke-width="0.7"/>
<rect x="1012.70" y="53.30" width="5.40" height="1.10" fill="#6a6a6a"/>
<circle cx="186.90" cy="72.30" r="2.20" fill="#e2e8f1" stroke="#a9b8cf" stroke-width="0.7"/>
<rect x="185.60" y="71.95" width="2.60" height="0.70" fill="#6f88ad"/>
<circle cx="186.90" cy="133.10" r="2.20" fill="#e2e8f1" stroke="#a9b8cf" stroke-width="0.7"/>
<rect x="185.60" y="132.75" width="2.60" height="0.70" fill="#6f88ad"/>
<circle cx="186.90" cy="193.90" r="2.20" fill="#e2e8f1" stroke="#a9b8cf" stroke-width="0.7"/>
<rect x="185.60" y="193.55" width="2.60" height="0.70" fill="#6f88ad"/>
<circle cx="186.90" cy="254.70" r="2.20" fill="#e2e8f1" stroke="#a9b8cf" stroke-width="0.7"/>
<rect x="185.60" y="254.35" width="2.60" height="0.70" fill="#6f88ad"/>
<circle cx="186.90" cy="386.43" r="2.20" fill="#e2e8f1" stroke="#a9b8cf" stroke-width="0.7"/>
<rect x="185.60" y="386.08" width="2.60" height="0.70" fill="#6f88ad"/>
<circle cx="165.60" cy="141.83" r="1.90" fill="#fbe7a0" stroke="#e2b93c" stroke-width="0.5"/>
<rect x="164.90" y="143.63" width="1.50" height="1.60" fill="#8aa0c0"/>
<path d="M167.60 141.63 l2.6 4.6 h-5.2z" fill="#f5b928" stroke="#d29618" stroke-width="0.4"/>
<circle cx="165.60" cy="212.77" r="1.90" fill="#fbe7a0" stroke="#e2b93c" stroke-width="0.5"/>
<rect x="164.90" y="214.57" width="1.50" height="1.60" fill="#8aa0c0"/>
<path d="M167.60 212.57 l2.6 4.6 h-5.2z" fill="#f5b928" stroke="#d29618" stroke-width="0.4"/>
<path d="M1007.10 76.45 l2.90 -2.90 l2.90 2.90" fill="none" stroke="#404040" stroke-width="1.3"/>
<path d="M1007.10 462.75 l2.90 2.90 l2.90 -2.90" fill="none" stroke="#404040" stroke-width="1.3"/>
<path d="M198.20 475.80 l-2.80 2.80 l2.80 2.80" fill="none" stroke="#a6a6a6" stroke-width="1.1"/>
<path d="M993.80 475.80 l2.80 2.80 l-2.80 2.80" fill="none" stroke="#a6a6a6" stroke-width="1.1"/>
<path d="M171.80 526.50 l-2.80 2.80 l2.80 2.80" fill="none" stroke="#a6a6a6" stroke-width="1.1"/>
<path d="M1001.00 526.50 l2.80 2.80 l-2.80 2.80" fill="none" stroke="#a6a6a6" stroke-width="1.1"/>
<rect x="1018.10" y="69.40" width="3.80" height="3.80" fill="#f0c02c" stroke="#f6dc8a" stroke-width="0.5"/>
<rect x="1017.60" y="86.30" width="5.00" height="2.50" fill="#fdf1c0" stroke="#f3cf4c" stroke-width="0.7" rx="1"/>
<rect x="1017.60" y="93.30" width="5.00" height="2.50" fill="#fdf1c0" stroke="#f3cf4c" stroke-width="0.7" rx="1"/>
<rect x="166.00" y="493.80" width="6.80" height="7.20" fill="#f7f9fd" stroke="#9aa8c8" stroke-width="0.6"/>
<circle cx="168.30" cy="496.00" r="1.50" fill="#e0282c"/>
<path d="M166.6 500.6 l1.7 -2.8 l1.7 2.8z" fill="#f0b02a"/>
<rect x="170.60" y="495.20" width="1.60" height="5.00" fill="#bccbe8"/>
<circle cx="225.60" cy="497.70" r="2.60" fill="#c4dcf4" stroke="#8cb8e6" stroke-width="0.6"/>
<circle cx="225.60" cy="497.70" r="1.20" fill="#eaf3fc" stroke="#4a80cc" stroke-width="0.7"/>
<path d="M271.6 494.6 h3.6 l1.6 1.6 v5.2 h-5.2z" fill="#f8fbff" stroke="#8fa6c8" stroke-width="0.6"/>
<path d="M274.2 499.0 h2.4 v-1.3 l2.2 2.0 l-2.2 2.0 v-1.3 h-2.4z" fill="#f2c040" stroke="#c08a1a" stroke-width="0.4"/>
<rect x="272.60" y="496.60" width="2.00" height="0.70" fill="#6f8fc4"/>
<rect x="335.80" y="494.60" width="6.20" height="5.20" fill="#e8f0fb" stroke="#3a66b8" stroke-width="1.1" rx="0.7"/>
<rect x="337.20" y="496.00" width="2.60" height="0.90" fill="#5c7fbd"/>
<rect x="337.60" y="500.40" width="2.60" height="0.80" fill="#3a66b8"/>
<path d="M383.60 495.20 l5 5 M388.60 495.20 l-5 5" fill="none" stroke="#8f8f8f" stroke-width="0.8"/>
<rect x="384.90" y="496.50" width="2.40" height="2.40" fill="none" stroke="#8f8f8f" stroke-width="0.6"/>
<circle cx="399.50" cy="498.00" r="2.10" fill="#3a9a8a" stroke="#1f6f66" stroke-width="0.5"/>
<path d="M396.3 498 h6.4 M397.1 495 l4.8 6 M401.9 495 l-4.8 6 M399.5 494.6 v6.8" fill="none" stroke="#2a7f74" stroke-width="0.6"/>
<rect x="830.70" y="492.60" width="5.40" height="5.20" fill="#c2c2c2" stroke="#b4b4b4" stroke-width="0.5"/>
<path d="M842.80 492.30 l5.40 5.40 M848.20 492.30 l-5.40 5.40" fill="none" stroke="#6c6c6c" stroke-width="1.9"/>
<path d="M854.60 491.60 l3.80 3.80 M858.40 491.60 l-3.80 3.80" fill="none" stroke="#707070" stroke-width="1.5"/>
<path d="M857.60 494.20 l4.20 4.20 M861.80 494.20 l-4.20 4.20" fill="none" stroke="#707070" stroke-width="1.5"/>
<rect x="865.05" y="490.40" width="0.9" height="9.20" fill="#a8a8a8"/>
<path d="M870.20 491.40 h3.40 l1.6 1.6 v5.00 h-5.00 z" fill="#f6f8fc" stroke="#9aa8c0" stroke-width="0.6"/>
<rect x="871.20" y="493.40" width="2.20" height="0.60" fill="#8aa2cc"/>
<rect x="871.20" y="494.80" width="2.60" height="0.60" fill="#8aa2cc"/>
<path d="M874.60 495.40 l3.00 3.00 M877.60 495.40 l-3.00 3.00" fill="none" stroke="#5a5a5a" stroke-width="0.9"/>
<rect x="886.60" y="491.60" width="3.80" height="6.60" fill="#f6f8fc" stroke="#8a9ab8" stroke-width="0.6"/>
<rect x="882.80" y="494.60" width="4.20" height="3.40" fill="#e9b730" stroke="#b98a1c" stroke-width="0.4"/>
<path d="M883.8 494.6 v-1.2 q1.1 -1.4 2.2 0 v1.2" fill="none" stroke="#b98a1c" stroke-width="0.6"/>
<path d="M895.20 491.40 h3.80 l1.6 1.6 v4.80 h-5.40 z" fill="#f6f8fc" stroke="#9aa8c0" stroke-width="0.6"/>
<rect x="896.20" y="493.40" width="2.20" height="0.60" fill="#8aa2cc"/>
<rect x="896.20" y="494.80" width="2.60" height="0.60" fill="#8aa2cc"/>
<path d="M898.4 494.0 h3.6 v3.2 l-1.6 -1 l-1.6 1.2z" fill="#eec13a" stroke="#b98a1c" stroke-width="0.3"/>
<rect x="905.40" y="489.20" width="11.90" height="10.90" fill="#c9e3f8" stroke="#8fc6f4" stroke-width="0.7"/>
<rect x="917.30" y="489.20" width="12.20" height="10.90" fill="#c9e3f8" stroke="#8fc6f4" stroke-width="0.7"/>
<rect x="908.80" y="491.60" width="6.20" height="4.60" fill="#eef3fb" stroke="#7f96c0" stroke-width="0.7"/>
<rect x="907.20" y="495.20" width="4.40" height="3.00" fill="#f8fafe" stroke="#7f96c0" stroke-width="0.6"/>
<rect x="910.80" y="492.80" width="2.00" height="1.60" fill="#9ab2dc"/>
<rect x="921.00" y="491.60" width="6.20" height="4.60" fill="#eef3fb" stroke="#7f96c0" stroke-width="0.7"/>
<rect x="919.40" y="495.20" width="4.40" height="3.00" fill="#f8fafe" stroke="#7f96c0" stroke-width="0.6"/>
<rect x="923.00" y="492.80" width="2.00" height="1.60" fill="#d8282c"/>
<rect x="936.60" y="494.00" width="7.00" height="4.60" fill="#fdfdfd" stroke="#66789a" stroke-width="0.7"/>
<rect x="936.60" y="494.00" width="7.00" height="1.30" fill="#4a78b8"/>
<path d="M940.2 495.2 l3.0 -3.0" fill="none" stroke="#2a9440" stroke-width="1.5"/>
<circle cx="943.60" cy="491.90" r="1.70" fill="#2f9e48"/>
<rect x="949.60" y="491.40" width="6.40" height="5.60" fill="#e4ecfa" stroke="#2f5fb3" stroke-width="1.2" rx="0.8"/>
<rect x="951.20" y="492.90" width="2.40" height="0.90" fill="#5c7fbd"/>
<rect x="951.40" y="497.80" width="2.80" height="0.80" fill="#2f5fb3"/>
<path d="M962.00 492.90 h6.40 l-3.20 3.00 z" fill="#000"/>
<rect x="974.40" y="492.40" width="7.00" height="6.00" fill="#fffbe8" stroke="#7f8c9c" stroke-width="0.7"/>
<rect x="974.40" y="492.40" width="7.00" height="1.50" fill="#4a78b8"/>
<circle cx="981.40" cy="492.00" r="1.50" fill="#f2c12e" stroke="#c79a1c" stroke-width="0.4"/>
<path d="M987.20 492.90 h6.40 l-3.20 3.00 z" fill="#000"/>
<rect x="1000.50" y="491.90" width="5.60" height="2.30" fill="#fff" stroke="#8a8a8a" stroke-width="0.6" rx="0.4"/>
<rect x="1012.70" y="492.40" width="5.00" height="5.20" fill="#fff" stroke="#7a7a7a" stroke-width="0.7"/>
<rect x="1012.40" y="491.90" width="5.60" height="1.10" fill="#6a6a6a"/>
<rect x="708.30" y="538.40" width="1.1" height="1.1" fill="#c8c8c8"/>
<rect x="708.30" y="540.70" width="1.1" height="1.1" fill="#c8c8c8"/>
<rect x="708.30" y="543.00" width="1.1" height="1.1" fill="#c8c8c8"/>
<rect x="708.30" y="545.30" width="1.1" height="1.1" fill="#c8c8c8"/>
<rect x="708.30" y="547.60" width="1.1" height="1.1" fill="#c8c8c8"/>
<rect x="938.10" y="538.00" width="1.1" height="1.1" fill="#c9ad72"/>
<rect x="938.10" y="540.30" width="1.1" height="1.1" fill="#c9ad72"/>
<rect x="938.10" y="542.60" width="1.1" height="1.1" fill="#c9ad72"/>
<rect x="938.10" y="544.90" width="1.1" height="1.1" fill="#c9ad72"/>
<rect x="938.10" y="547.20" width="1.1" height="1.1" fill="#c9ad72"/>
<path d="M944.4 541.6 q2 -2.4 4.4 -1.2 l2.2 0.2 v2.6 l-3.6 0.6z" fill="#b9b9b9" stroke="#8a8a8a" stroke-width="0.4"/>
<rect x="948.60" y="541.40" width="4.20" height="3.80" fill="#e8b838" stroke="#b98a1c" stroke-width="0.4"/>
<rect x="955.75" y="538.40" width="0.9" height="9.60" fill="#b0b0b0"/>
<path d="M961.4 540.6 q1.9 -1.0 3.7 0 q1.8 -1.0 3.7 0 v5.4 q-1.9 -1.0 -3.7 0 q-1.8 -1.0 -3.7 0z M965.1 540.6 v5.4" fill="none" stroke="#ee9a3a" stroke-width="0.8"/>
<path d="M973.0 541.8 l4.0 -1.6 l4.0 1.6 l-4.0 1.6z" fill="#ee9a3a"/>
<path d="M974.8 543.4 v2.0 q2.2 1.2 4.4 0 v-2.0" fill="#ee9a3a"/>
<path d="M980.6 542 v3" fill="none" stroke="#ee9a3a" stroke-width="0.6"/>
<path d="M986.0 546.6 l5.2 -5.6" fill="none" stroke="#ee9a3a" stroke-width="1.5"/>
<path d="M991.4 538.8 v2.4 M990.2 540.0 h2.4" fill="none" stroke="#ee9a3a" stroke-width="0.6"/>
<circle cx="1001.10" cy="543.40" r="3.30" fill="none" stroke="#ee9a3a" stroke-width="0.9"/>
<circle cx="1001.10" cy="543.40" r="1.20" fill="none" stroke="#ee9a3a" stroke-width="0.6"/>
<rect x="1009.20" y="538.00" width="1.1" height="1.1" fill="#c8c8c8"/>
<rect x="1009.20" y="540.30" width="1.1" height="1.1" fill="#c8c8c8"/>
<rect x="1009.20" y="542.60" width="1.1" height="1.1" fill="#c8c8c8"/>
<rect x="1009.20" y="544.90" width="1.1" height="1.1" fill="#c8c8c8"/>
<rect x="1009.20" y="547.20" width="1.1" height="1.1" fill="#c8c8c8"/>
<circle cx="1017.50" cy="542.20" r="2.90" fill="#fbe58a" stroke="#e8b92e" stroke-width="0.6"/>
<rect x="1016.30" y="545.20" width="2.40" height="2.40" fill="#9a9a9a"/>
<path d="M7.6 558.7 l5.8 -0.8 v5.3 h-5.8z M13.9 557.8 l7.3 -1.0 v6.4 h-7.3z M7.6 563.7 h5.8 v5.3 l-5.8 -0.8z M13.9 563.7 h7.3 v6.4 l-7.3 -1.0z" fill="#ffffff"/>
<circle cx="44.90" cy="561.60" r="4.20" fill="none" stroke="#ffffff" stroke-width="1.1"/>
<path d="M41.8 564.8 l-4.8 4.8" fill="none" stroke="#ffffff" stroke-width="1.2"/>
<rect x="65.40" y="560.60" width="8.60" height="5.40" fill="none" stroke="#ffffff" stroke-width="1"/>
<path d="M65.4 558.9 v-1.5 h8.6 v1.5 M65.4 567.7 v1.5 h8.6 v-1.5" fill="none" stroke="#ffffff" stroke-width="1"/>
<path d="M77.7 557.0 v12.2" fill="none" stroke="#ffffff" stroke-width="0.9"/>
<rect x="77.00" y="561.20" width="1.40" height="1.60" fill="#ffffff"/>
<g transform="translate(103.5 562.5)"><circle r="6.3" fill="#db4437"/><path d="M0 0 L-5.46 -3.15 A6.3 6.3 0 0 0 0 6.3 L2.7 1.6z" fill="#0f9d58"/><path d="M0 0 L2.73 1.6 L0 6.3 A6.3 6.3 0 0 0 6.0 -1.9 L0 -1.9z" fill="#ffcd40"/><circle r="2.9" fill="#f1f1f1"/><circle r="2.2" fill="#4285f4"/></g>
<rect x="91.90" y="573.10" width="23.20" height="2.10" fill="#78d0da"/>
<path d="M127.9 558.0 h4.2 l1.0 1.2 h7.0 v8.6 h-12.2z" fill="#f6c84c"/>
<rect x="127.90" y="560.60" width="12.20" height="7.20" fill="#fddc7a"/>
<rect x="131.00" y="563.40" width="6.00" height="4.40" fill="#3f8fe0"/>
<rect x="132.40" y="565.20" width="3.20" height="2.60" fill="#fddc7a"/>
<rect x="122.60" y="573.10" width="23.00" height="2.10" fill="#78d0da"/>
<g transform="translate(164.6 562.2)"><circle r="6.4" fill="#1b9de2"/><path d="M-6.2 1.4 A6.4 6.4 0 0 1 6.2 -1.6 Q4.6 -4.2 0.8 -4.0 Q-4.0 -3.6 -6.2 1.4z" fill="#46d367"/><path d="M-1.6 0.8 Q-0.8 -2.2 2.6 -1.4 Q5.8 -0.2 4.2 2.0 L0.6 2.0 Q1.0 4.2 4.4 3.6 Q2.0 6.6 -1.2 5.0 Q-3.4 3.6 -1.6 0.8z" fill="#343130"/><path d="M-6.2 1.4 Q-5.0 6.4 0 6.4 Q-3.6 4.4 -2.8 0.6z" fill="#0c59a4"/></g>
<rect x="153.00" y="573.10" width="23.20" height="2.10" fill="#78d0da"/>
<rect x="206.80" y="550.50" width="2.90" height="22.60" fill="#a05c22"/>
<rect x="180.00" y="573.00" width="29.70" height="2.60" fill="#f27a12"/>
<rect x="189.00" y="557.00" width="11.80" height="11.50" fill="#ffd60a"/>
<rect x="189.00" y="565.60" width="11.80" height="2.90" fill="#f5c400"/>
<path d="M200.2 562.6 v5.0 h-5.2z" fill="#3a3a48"/>
<g transform="translate(225.2 562.5)"><circle r="6.2" fill="#e85aa8"/><path d="M-6.2 0 A6.2 6.2 0 0 0 6.2 0z" fill="#8a6af0"/><path d="M-6.2 0 A6.2 6.2 0 0 1 0 -6.2 L0 0z" fill="#f0527a"/><circle r="5.0" fill="#fdfdfd"/><path d="M-1.2 2.2 v-4.6 l3.6 -0.9 v4.6" fill="none" stroke="#e0468c" stroke-width="0.9"/><circle cx="-2.0" cy="2.3" r="1.1" fill="#c04ae0"/><circle cx="1.6" cy="1.4" r="1.1" fill="#5a7af0"/></g>
<rect x="213.80" y="573.10" width="23.30" height="2.10" fill="#78d0da"/>
<circle cx="254.90" cy="562.50" r="6.20" fill="#f29b30"/>
<circle cx="255.90" cy="562.50" r="6.00" fill="#2c2255"/>
<rect x="250.20" y="560.35" width="11.50" height="1.10" fill="#b9b5d0"/>
<rect x="250.20" y="562.15" width="11.50" height="1.10" fill="#e6e4f0"/>
<rect x="250.20" y="563.95" width="11.50" height="1.10" fill="#b9b5d0"/>
<rect x="240.90" y="573.10" width="29.70" height="2.10" fill="#78d0da"/>
<circle cx="664.80" cy="563.00" r="7.60" fill="#1e8ad6" stroke="#f4f4f4" stroke-width="1.2"/>
<text x="661.4" y="567.0" font-family="Liberation Sans, sans-serif" font-size="11" font-weight="bold" fill="#fff">?</text>
<circle cx="671.90" cy="566.90" r="2.60" fill="#2f9be6" stroke="#cfe8fa" stroke-width="0.5"/>
<rect x="671.50" y="566.30" width="0.80" height="2.20" fill="#fff"/>
<rect x="671.50" y="565.00" width="0.80" height="0.80" fill="#fff"/>
<path d="M697.2 556.6 A7.0 7.0 0 1 1 689.8 565.6 A4.9 4.9 0 0 0 697.2 556.6z" fill="#fcc81e"/>
<path d="M700.2 557.4 A7.0 7.0 0 0 1 692.0 569.8 A8.2 8.2 0 0 0 700.2 557.4z" fill="#f5a20c"/>
<path d="M688.2 561.0 q-0.2 -1.8 1.6 -1.9 q0.8 -1.6 2.6 -0.8 q1.6 0.2 1.4 1.7 q0.2 1.2 -1.2 1.2 h-3.6 q-0.8 0 -0.8 -0.2z" fill="#d4e4f6"/>
<path d="M806.6 565.8 l5.0 -4.8 l5.0 4.8" fill="none" stroke="#ffffff" stroke-width="1"/>
<rect x="831.20" y="560.00" width="11.20" height="6.80" fill="none" stroke="#ffffff" stroke-width="0.9"/>
<rect x="832.40" y="561.20" width="3.20" height="4.40" fill="#ffffff"/>
<rect x="842.80" y="562.00" width="1.00" height="2.80" fill="#ffffff"/>
<path d="M858.20 568.0 A9.40 9.40 0 0 1 867.6 558.60" fill="none" stroke="#8a8887" stroke-width="0.9"/>
<path d="M861.00 568.0 A6.60 6.60 0 0 1 867.6 561.40" fill="none" stroke="#a9a7a6" stroke-width="0.9"/>
<path d="M863.80 568.0 A3.80 3.80 0 0 1 867.6 564.20" fill="none" stroke="#d8d6d5" stroke-width="0.9"/>
<circle cx="866.90" cy="567.30" r="0.90" fill="#ffffff"/>
<path d="M882.0 561.8 h2.0 l3.0 -2.8 v8.8 l-3.0 -2.8 h-2.0z" fill="none" stroke="#ffffff" stroke-width="0.8"/>
<path d="M889.0 561.4 q1.4 2.0 0 4.2" fill="none" stroke="#ffffff" stroke-width="0.7"/>
<path d="M890.8 559.8 q2.4 3.6 0 7.2" fill="none" stroke="#aaa" stroke-width="0.7"/>
<path d="M892.6 558.6 q3.0 4.8 0 9.6" fill="none" stroke="#777" stroke-width="0.7"/>
<path d="M991.2 556.8 h12.4 v9.4 h-4.8 l-1.4 2.6 l-1.4 -2.6 h-4.8z" fill="#ffffff"/>
<rect x="993.40" y="559.20" width="8.00" height="0.80" fill="#343130"/>
<rect x="993.40" y="561.20" width="8.00" height="0.80" fill="#343130"/>
<rect x="993.40" y="563.20" width="5.00" height="0.80" fill="#343130"/>
<rect x="1020.20" y="550.50" width="0.70" height="25.50" fill="#8a8887"/>
</svg>
</body></html>
